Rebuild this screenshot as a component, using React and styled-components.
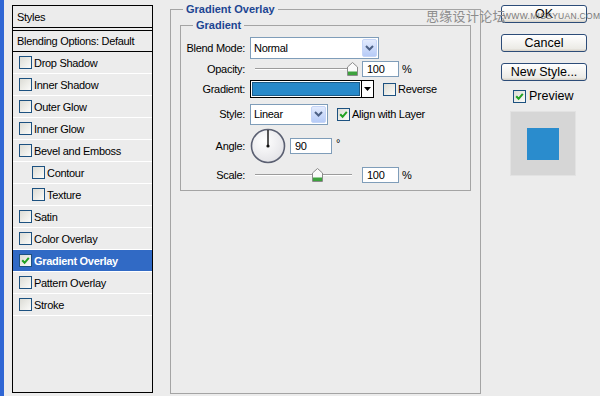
import React from "react";
import styled, { createGlobalStyle } from "styled-components";

const GlobalStyle = createGlobalStyle`
    html, body {
        margin: 0;
        padding: 0;
        background: #ececec;
    }
    body {
        font-family: Tahoma, "Liberation Sans", Arial, sans-serif;
        font-size: 11px;
        letter-spacing: -0.3px;
        color: #000;
    }
`;

const Window = styled.div`
    position: relative;
    width: 600px;
    height: 396px;
    display: flex;
    background: #ececec;
    overflow: hidden;
`;

const EdgeStrip = styled.div`
    width: 4px;
    background: #2f66d4;
`;

/* ---------- left list of styles ---------- */

const StylesPanel = styled.div`
    width: 139px;
    margin: 5px 0 3px 8px;
    border: 1px solid #000;
    display: flex;
    flex-direction: column;
`;

const PanelHeader = styled.div`
    height: 21px;
    display: flex;
    align-items: center;
    padding-left: 4px;
    border-bottom: 1px solid #000;
    margin-bottom: 2px;
`;

const BlendingRow = styled.div`
    height: 20px;
    display: flex;
    align-items: center;
    padding-left: 4px;
    border-top: 1px solid #000;
    border-bottom: 1px solid #000;
`;

const StyleItem = styled.div`
    height: 21px;
    display: flex;
    align-items: center;
    gap: 2px;
    padding-left: ${p => (p.indent ? 19 : 6)}px;
    border-bottom: 1px solid #fff;
    background: ${p => (p.selected ? "#316ac5" : "transparent")};
    color: ${p => (p.selected ? "#fff" : "#000")};
    font-weight: ${p => (p.selected ? 700 : 400)};
`;

const Box = styled.span`
    width: 11px;
    height: 11px;
    flex-shrink: 0;
    border: 1px solid #1c5180;
    background: linear-gradient(135deg, #dcdcd5, #fbfbf9);
    display: inline-flex;
    align-items: center;
    justify-content: center;
    margin-left: ${p => p.ml || 0}px;
`;

const CheckBox = ({ checked, ml }) => (
    <Box ml={ml}>
        {checked && (
            <svg width="9" height="9" viewBox="0 0 9 9">
                <path
                    d="M1.2 4.2 L3.6 6.8 L7.8 1.8"
                    fill="none"
                    stroke="#21a121"
                    strokeWidth="2"
                />
            </svg>
        )}
    </Box>
);

/* ---------- centre group boxes ---------- */

const OuterGroup = styled.fieldset`
    width: 309px;
    margin: 3px 0 2px 17px;
    padding: 0;
    border: 1px solid #a4a4a4;
    box-sizing: content-box;
    min-width: 0;
`;

const InnerGroup = styled.fieldset`
    margin: 3px 9px 0 9px;
    padding: 4px 0 4px 0;
    border: 1px solid #a4a4a4;
    min-width: 0;
`;

const Legend = styled.legend`
    margin-left: 12px;
    padding: 0 3px;
    line-height: 13px;
    font-weight: 700;
    letter-spacing: 0;
    color: #1c4592;
`;

const Row = styled.div`
    height: ${p => p.h}px;
    display: flex;
    align-items: center;
`;

const Label = styled.span`
    width: 64px;
    text-align: right;
    margin-right: 5px;
    flex-shrink: 0;
`;

const Select = styled.div`
    width: ${p => p.w}px;
    height: ${p => p.h}px;
    box-sizing: border-box;
    border: 1px solid #7f9db9;
    background: #fff;
    display: flex;
    align-items: center;
    justify-content: space-between;
    padding-left: 3px;
`;

const SelectButton = styled.span`
    width: 15px;
    align-self: stretch;
    margin: 1px;
    border-radius: 2px;
    background: linear-gradient(#e3ebfd, #b6cbf7);
    border: 1px solid #c5d5f7;
    box-sizing: border-box;
    display: flex;
    align-items: center;
    justify-content: center;
`;

const Chevron = () => (
    <svg width="9" height="6" viewBox="0 0 9 6">
        <path d="M1 1 L4.5 4.5 L8 1" fill="none" stroke="#4d6185" strokeWidth="2" />
    </svg>
);

const NumberField = styled.div`
    width: ${p => p.w}px;
    height: 16px;
    box-sizing: border-box;
    border: 1px solid #7f9db9;
    background: #fff;
    display: flex;
    align-items: center;
    padding-left: 4px;
    margin-left: ${p => p.ml}px;
`;

const Unit = styled.span`
    margin-left: ${p => p.ml || 3}px;
    margin-bottom: ${p => p.raise || 0}px;
`;

const Slider = styled.div`
    position: relative;
    width: 103px;
    height: 16px;
    margin-left: 5px;
`;

const Track = styled.div`
    width: 97px;
    height: 1px;
    margin-top: 7px;
    background: #9c9c9c;
    border-bottom: 1px solid #fff;
`;

const Thumb = styled.svg`
    position: absolute;
    top: 1px;
`;

const SliderControl = ({ pos }) => (
    <Slider>
        <Track />
        <Thumb
            width="11"
            height="14"
            viewBox="0 0 11 14"
            style={{ left: pos - 5.5 }}
        >
            <path d="M0.5 5 L5.5 0.5 L10.5 5 V13.5 H0.5 Z" fill="#fafafa" stroke="#8a8a8a" />
            <rect x="1" y="9.5" width="9" height="3.5" fill="#3da23d" />
        </Thumb>
    </Slider>
);

const GradientField = styled.div`
    width: 124px;
    height: 18px;
    box-sizing: border-box;
    border: 1px solid #000;
    background: #fff;
    display: flex;
`;

const GradientFill = styled.div`
    flex: 1;
    margin: 1px;
    border: 1px solid #1b5a86;
    background: #2889c9;
`;

const GradientArrow = styled.div`
    width: 11px;
    border-left: 1px solid #000;
    display: flex;
    align-items: center;
    justify-content: center;
`;

const OptionLabel = styled.span`
    margin-left: 2px;
`;

const AngleDial = () => (
    <svg width="36" height="36" viewBox="0 0 36 36">
        <defs>
            <radialGradient id="dialFill" cx="40%" cy="35%" r="70%">
                <stop offset="0" stopColor="#ffffff" />
                <stop offset="1" stopColor="#e2e2e6" />
            </radialGradient>
        </defs>
        <circle cx="18" cy="18" r="16.5" fill="url(#dialFill)" stroke="#5b6072" strokeWidth="1.6" />
        <line x1="18" y1="18" x2="18" y2="2" stroke="#111" strokeWidth="1.4" />
        <circle cx="18" cy="18" r="1.6" fill="#111" />
    </svg>
);

/* ---------- right column ---------- */

const SideColumn = styled.div`
    width: 86px;
    margin: 5px 0 0 20px;
    display: flex;
    flex-direction: column;
`;

const DialogButton = styled.div`
    height: 18px;
    box-sizing: border-box;
    margin-top: ${p => p.mt || 0}px;
    border: 1px solid #2c4c78;
    border-radius: 3px;
    background: linear-gradient(#ffffff, #ecebe6 85%, #d6d0c5);
    display: flex;
    align-items: center;
    justify-content: center;
    font-family: "Liberation Sans", Arial, sans-serif;
    font-size: 12.5px;
    letter-spacing: 0;
`;

const PreviewToggle = styled.div`
    display: flex;
    align-items: center;
    gap: 3px;
    margin: 8px 0 0 12px;
    font-family: "Liberation Sans", Arial, sans-serif;
    font-size: 12.5px;
    letter-spacing: 0;
`;

const PreviewSwatch = styled.div`
    width: 66px;
    height: 65px;
    box-sizing: border-box;
    margin: 8px 0 0 9px;
    background: #d6d6d6;
    border: 1px solid #e2e2e2;
    display: flex;
    align-items: center;
    justify-content: center;
`;

const PreviewColor = styled.div`
    width: 32px;
    height: 32px;
    background: #2a8ccd;
`;

const Watermark = styled.div`
    position: absolute;
    top: 6px;
    left: 426px;
    font-family: "Noto Sans CJK SC", sans-serif;
    font-size: 13px;
    color: #8c8c8c;
    letter-spacing: 0.3px;
`;

const WatermarkUrl = styled.div`
    position: absolute;
    top: 11px;
    left: 503px;
    font-family: "Liberation Sans", Arial, sans-serif;
    font-size: 8.5px;
    color: #7a7a7a;
    letter-spacing: 0.3px;
`;

const styleItems = [
    { name: "Drop Shadow" },
    { name: "Inner Shadow" },
    { name: "Outer Glow" },
    { name: "Inner Glow" },
    { name: "Bevel and Emboss" },
    { name: "Contour", indent: true },
    { name: "Texture", indent: true },
    { name: "Satin" },
    { name: "Color Overlay" },
    { name: "Gradient Overlay", checked: true, selected: true },
    { name: "Pattern Overlay" },
    { name: "Stroke" }
];

export default function App() {
    return (
        <Window>
            <GlobalStyle />
            <EdgeStrip />
            <StylesPanel>
                <PanelHeader>Styles</PanelHeader>
                <BlendingRow>Blending Options: Default</BlendingRow>
                {styleItems.map(item => (
                    <StyleItem
                        key={item.name}
                        indent={item.indent}
                        selected={item.selected}
                    >
                        <CheckBox checked={item.checked} />
                        {item.name}
                    </StyleItem>
                ))}
            </StylesPanel>

            <OuterGroup>
                <Legend>Gradient Overlay</Legend>
                <InnerGroup>
                    <Legend>Gradient</Legend>
                    <Row h={23}>
                        <Label>Blend Mode:</Label>
                        <Select w={129} h={22}>
                            Normal
                            <SelectButton>
                                <Chevron />
                            </SelectButton>
                        </Select>
                    </Row>
                    <Row h={19}>
                        <Label>Opacity:</Label>
                        <SliderControl pos={97} />
                        <NumberField w={37} ml={4}>100</NumberField>
                        <Unit>%</Unit>
                    </Row>
                    <Row h={22}>
                        <Label>Gradient:</Label>
                        <GradientField>
                            <GradientFill />
                            <GradientArrow>
                                <svg width="7" height="4" viewBox="0 0 7 4">
                                    <path d="M0 0 H7 L3.5 4 Z" fill="#000" />
                                </svg>
                            </GradientArrow>
                        </GradientField>
                        <CheckBox ml={9} />
                        <OptionLabel>Reverse</OptionLabel>
                    </Row>
                    <Row h={28}>
                        <Label>Style:</Label>
                        <Select w={78} h={21}>
                            Linear
                            <SelectButton>
                                <Chevron />
                            </SelectButton>
                        </Select>
                        <CheckBox checked ml={9} />
                        <OptionLabel>Align with Layer</OptionLabel>
                    </Row>
                    <Row h={36}>
                        <Label>Angle:</Label>
                        <AngleDial />
                        <NumberField w={42} ml={4}>90</NumberField>
                        <Unit ml={4} raise={6}>°</Unit>
                    </Row>
                    <Row h={22}>
                        <Label>Scale:</Label>
                        <SliderControl pos={62} />
                        <NumberField w={37} ml={4}>100</NumberField>
                        <Unit>%</Unit>
                    </Row>
                </InnerGroup>
            </OuterGroup>

            <SideColumn>
                <DialogButton>OK</DialogButton>
                <DialogButton mt={11}>Cancel</DialogButton>
                <DialogButton mt={11}>New Style...</DialogButton>
                <PreviewToggle>
                    <CheckBox checked />
                    Preview
                </PreviewToggle>
                <PreviewSwatch>
                    <PreviewColor />
                </PreviewSwatch>
            </SideColumn>

            <Watermark>思缘设计论坛</Watermark>
            <WatermarkUrl>WWW.MISSYUAN.COM</WatermarkUrl>
        </Window>
    );
}
